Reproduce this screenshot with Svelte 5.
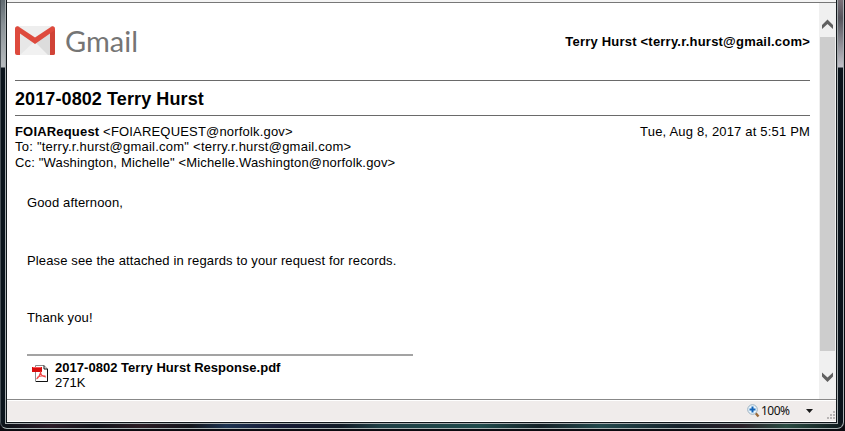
<script>
  const paragraphs = [
    'Good afternoon,',
    'Please see the attached in regards to your request for records.',
    'Thank you!'
  ];
</script>

<div class="window">
  <div class="inner">
    <div class="strip"></div>
    <div class="view">
      <main>
        <header>
          <div class="logo">
            <svg width="40" height="30" viewBox="0 0 40 30">
              <rect x="1" y="0" width="38" height="29" rx="2" fill="#e7e7e7" />
              <path d="M5 29 20 15 35 29z" fill="#f1f1f1" />
              <path d="M20 16 35 6V29H33z" fill="#dcdcdc" />
              <path d="M3 0H37L20 12z" fill="#eee" />
              <path d="M0 3Q0 0 3 .3L20 11.5 37 .3Q40 0 40 3V27Q40 29 38 29H35V7.5L20 18 5 7.5V29H2Q0 29 0 27z" fill="#de4a3d" />
              <path d="M35 7.5 40 4V27Q40 29 38 29H35z" fill="#d04337" />
            </svg>
            <span class="wordmark">Gmail</span>
          </div>
          <b class="account">Terry Hurst &lt;terry.r.hurst@gmail.com&gt;</b>
        </header>
        <h1>2017-0802 Terry Hurst</h1>
        <div class="meta">
          <div>
            <div class="from"><b>FOIARequest</b> &lt;FOIAREQUEST@norfolk.gov&gt;</div>
            <div class="to">To: "terry.r.hurst@gmail.com" &lt;terry.r.hurst@gmail.com&gt;</div>
            <div class="cc">Cc: "Washington, Michelle" &lt;Michelle.Washington@norfolk.gov&gt;</div>
          </div>
          <div class="date">Tue, Aug 8, 2017 at 5:51 PM</div>
        </div>
        <section>
          {#each paragraphs as p}
            <p>{p}</p>
          {/each}
        </section>
        <div class="attachment">
          <svg width="16" height="17" viewBox="0 0 16 17">
            <path d="M3.5.5H12L15.5 4V16.5H3.5z" fill="#fff" stroke="#8a8a8a" />
            <path d="M15.5 4V16.5H4M12 .5V4H15.5" fill="none" stroke="#111" />
            <rect y="2" width="10" height="5" fill="#d90d0d" />
            <rect x="1" y="2" width="8" height="1" fill="#f55" />
            <path d="M9 6C8 10 6 13 4.5 14M8.5 7C9 10 11 12 14 12M5 12.5C8 10.5 11 10.5 13.5 11" fill="none" stroke="#f04444" stroke-width="1.1" />
          </svg>
          <div>
            <div class="file"><b>2017-0802 Terry Hurst Response.pdf</b></div>
            <div>271K</div>
          </div>
        </div>
      </main>
      <div class="scroll">
        <svg width="17" height="34" viewBox="0 0 17 34"><path d="M3 22V26L8.5 21 14 26V22L8.5 16.5z" fill="#606060" /></svg>
        <div class="thumb"></div>
        <svg width="17" height="48" viewBox="0 0 17 48"><path d="M3 21.5V25.5L8.5 31 14 25.5V21.5L8.5 26.5z" fill="#606060" /></svg>
      </div>
    </div>
    <footer>
      <svg width="13" height="14" viewBox="0 0 13 14">
        <path d="M8.5 9 11.5 12.5" stroke="#9b6a3a" stroke-width="2.4" />
        <circle cx="5.5" cy="5.5" r="4.8" fill="#e8f4fc" stroke="#9ab0c0" />
        <path d="M5.5 2.5V8.5M2.5 5.5H8.5" stroke="#1464b8" stroke-width="2" />
      </svg>
      <span class="zoom">100%</span>
      <svg width="7" height="4" viewBox="0 0 7 4"><path d="M0 0H7L3.5 4z" fill="#1a1a1a" /></svg>
      <svg class="grip" width="9" height="9" viewBox="0 0 9 9" fill="#b8b4b4">
        <path d="M6 0h2v2H6zM3 3h2v2H3zM6 3h2v2H6zM0 6h2v2H0zM3 6h2v2H3zM6 6h2v2H6z" />
      </svg>
    </footer>
  </div>
</div>

<style>
  :global(body) { background: #0b0a10; overflow: hidden; }
  .window {
    box-sizing: border-box; width: 844px; height: 429px; padding: 0 7px 6px 6px;
    border-right: 1px solid #aab0b4; border-bottom: 1px solid #aab4b4; border-left: 1px solid #4a5258;
    border-radius: 0 0 7px 7px;
    background:
      linear-gradient(#606a70, #8a9297 25px, #b7bcbf 67px, transparent 68px) 0 0 / 6px 100% no-repeat,
      linear-gradient(#7a7078, #55545c 18px, #c0c0c8 67px, transparent 68px) 100% 0 / 7px 100% no-repeat,
      linear-gradient(90deg, #0b1118, #2c1d29 50px, #11131a 95px, #2b1d25 140px, #12151c 190px, #1d3351 225px, #171b36 280px, #101a26 340px, #204046 380px, #204b4c 480px, #142127 540px, #23494d 600px, #15212a 680px, #291f28 740px, #294b42 785px, #0e181c) 0 100% / 100% 5px no-repeat,
      #0b141c;
  }
  .inner {
    box-sizing: border-box; display: flex; flex-direction: column; height: 422px; width: 829px;
    background: #fff; box-shadow: 0 0 0 1px #10161a, 0 0 0 2px #a5abad;
    border-bottom: 1px solid #fff;
  }
  .strip { box-sizing: border-box; height: 3px; background: #f4f4f4; border-bottom: 1px solid #777; flex: none; }
  .view { display: flex; height: 396px; flex: none; }
  main { box-sizing: border-box; width: 812px; padding: 0 9px 0 8px; font: 13px/15px "Liberation Sans", Arial, sans-serif; color: #000; white-space: nowrap; }
  header { box-sizing: border-box; height: 77px; display: flex; justify-content: space-between; padding-top: 22px; }
  .logo { display: flex; height: 32px; }
  .logo svg { margin-top: 1px; }
  .wordmark { margin-left: 10px; font: 29px/32px Lato, sans-serif; color: #757575; }
  .account { margin-top: 9px; letter-spacing: .21px; }
  h1 { box-sizing: border-box; height: 36px; margin: 0; border: solid #6a6a6a; border-width: 1px 0; font-size: 18px; line-height: 37px; letter-spacing: .1px; }
  .meta { display: flex; justify-content: space-between; padding-top: 8px; line-height: 15.4px; letter-spacing: .18px; }
  .to { letter-spacing: .235px; }
  .cc { letter-spacing: .165px; }
  section { padding: 24.8px 12px 0; letter-spacing: .14px; }
  p { margin: 0; height: 57.5px; line-height: 15px; }
  .attachment { display: flex; box-sizing: border-box; width: 386px; margin: -13.5px 0 0 12px; padding: 4px 0 0 5px; border-top: 2px solid #a3a3a3; }
  .attachment svg { margin: 5px 7px 0 0; }
  .file { letter-spacing: .03px; }
  .scroll { width: 17px; display: flex; flex-direction: column; align-items: center; background: #f0f0f0; }
  .scroll svg { flex: none; }
  .thumb { width: 15px; flex: 1; background: #cdcdcd; }
  footer { flex: 1; display: flex; align-items: center; border-top: 1px solid #888; box-shadow: inset 0 1px #fff; background: #f0eceb; font: 12px/14px "Noto Sans", sans-serif; color: #111; padding-left: 740px; }
  .zoom { margin-left: 1px; width: 45px; letter-spacing: -.5px; }
  .grip { margin: 10px 0 0 14px; }
</style>
